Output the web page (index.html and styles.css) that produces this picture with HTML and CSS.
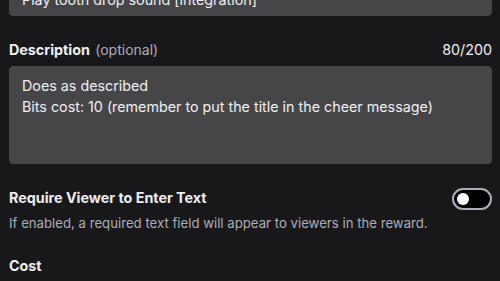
FILE: index.html
```html
<!DOCTYPE html>
<html lang="en">
<head>
    <meta charset="UTF-8">
    <meta name="viewport" content="width=device-width, initial-scale=1.0">
    <title>Reward settings</title>
    <link rel="stylesheet" href="styles.css">
</head>
<body>
    <div class="reward-form">
        <div class="input title-input">Play tooth drop sound [integration]</div>

        <div class="field">
            <div class="label-row">
                <label class="label">Description <span class="optional">(optional)</span></label>
                <span class="count">80/200</span>
            </div>
            <div class="input textarea">Does as described<br>Bits cost: 10 (remember to put the title in the cheer message)</div>
        </div>

        <div class="toggle-row">
            <div class="toggle-text">
                <div class="label">Require Viewer to Enter Text</div>
                <p class="hint">If enabled, a required text field will appear to viewers in the reward.</p>
            </div>
            <span class="toggle"><span class="knob"></span></span>
        </div>

        <div class="label cost">Cost</div>
    </div>
</body>
</html>
```

FILE: styles.css
```css
*{
    margin: 0;
    padding: 0;
    box-sizing: border-box;
}
body{
    background-color: #18181b;
    color: #efeff1;
    font-family: Inter, "Noto Sans", sans-serif;
    font-size: 14.3px;
    overflow: hidden;
}
.reward-form{
    padding: 0 8px 0 9px;
}
.input{
    background-color: #464649;
    border: 1px solid #464649;
    border-radius: 4px;
    color: #efeff1;
    line-height: 21px;
    padding: 8px 12px;
}
.title-input{
    margin-top: -20px;
    padding-bottom: 5px;
    white-space: nowrap;
}
.field{
    margin-top: 24px;
}
.label-row{
    display: flex;
    justify-content: space-between;
    align-items: center;
    margin-bottom: 6px;
}
.label{
    font-size: 14.3px;
    font-weight: 700;
    line-height: 20px;
}
.optional{
    color: #adadb8;
    font-weight: 400;
    font-size: 14px;
    margin-left: 2px;
}
.count{
    line-height: 20px;
}
.textarea{
    height: 98px;
}
.toggle-row{
    display: flex;
    justify-content: space-between;
    align-items: flex-start;
    margin-top: 24px;
}
.hint{
    color: #adadb8;
    font-size: 13.2px;
    line-height: 20px;
    margin-top: 5px;
}
.toggle{
    width: 40px;
    height: 22px;
    border: 2px solid #adadb8;
    border-radius: 11px;
    background-color: #000;
    display: flex;
    align-items: center;
    padding-left: 3px;
}
.knob{
    width: 12px;
    height: 12px;
    border-radius: 50%;
    background-color: #fff;
}
.cost{
    margin-top: 23px;
}
```
